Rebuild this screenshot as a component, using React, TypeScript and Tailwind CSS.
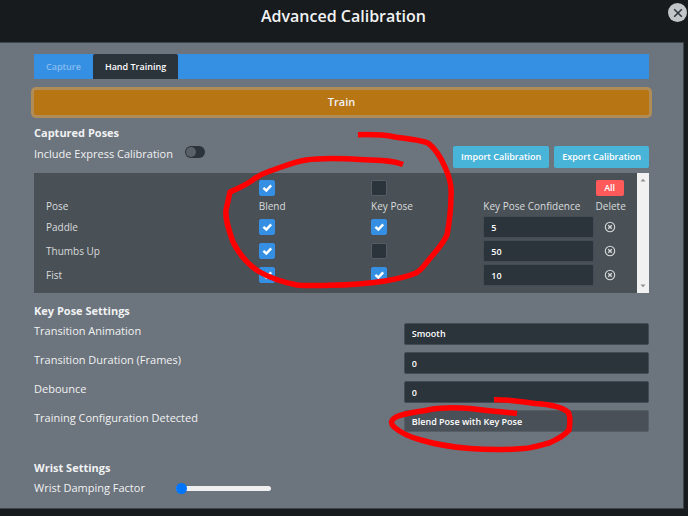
import React, { useState } from "react";

type Pose = {
  name: string;
  blend: boolean;
  keyPose: boolean;
  confidence: string;
};

const initialPoses: Pose[] = [
  { name: "Paddle", blend: true, keyPose: true, confidence: "5" },
  { name: "Thumbs Up", blend: true, keyPose: false, confidence: "50" },
  { name: "Fist", blend: true, keyPose: true, confidence: "10" },
];

const fieldClass =
  "block w-full h-[22px] px-[7px] rounded-xs border border-[#434b54] bg-[#2b333b] text-[9px] leading-4 font-semibold text-white appearance-none outline-none";

const Checkbox = ({
  label,
  checked,
  onChange,
}: {
  label: string;
  checked: boolean;
  onChange: (checked: boolean) => void;
}) => (
  <label className="grid size-4 place-items-center">
    <input
      type="checkbox"
      aria-label={label}
      checked={checked}
      onChange={(e) => onChange(e.target.checked)}
      className="peer col-start-1 row-start-1 size-4 appearance-none rounded-xs border border-[#565d64] bg-[#2b333b] checked:border-[#358fe3] checked:bg-[#358fe3]"
    />
    <svg
      viewBox="0 0 16 16"
      className="pointer-events-none col-start-1 row-start-1 hidden size-4 peer-checked:block"
      fill="none"
      stroke="white"
      strokeWidth="2.4"
    >
      <path d="M4.4 7.9 7.3 10.5 12.2 5.4" />
    </svg>
  </label>
);

const DeleteIcon = () => (
  <svg viewBox="0 0 12 12" className="size-3" fill="none" stroke="#d5d8da">
    <circle cx="6" cy="6" r="4.7" strokeWidth="1.1" />
    <path d="M4.2 4.2 7.8 7.8M7.8 4.2 4.2 7.8" strokeWidth="1.3" />
  </svg>
);

const ScrollBar = () => (
  <div className="flex w-3 shrink-0 flex-col items-center justify-between bg-[#f1f1f1] py-[5px]">
    <svg viewBox="0 0 6 4" className="h-1 w-1.5" fill="#8f8f8f">
      <path d="M0.5 3.5 3 0.8 5.5 3.5Z" />
    </svg>
    <svg viewBox="0 0 6 4" className="h-1 w-1.5" fill="#8f8f8f">
      <path d="M0.5 0.5 3 3.2 5.5 0.5Z" />
    </svg>
  </div>
);

const SettingRow = ({
  id,
  label,
  children,
}: {
  id: string;
  label: string;
  children: React.ReactNode;
}) => (
  <div className="grid grid-cols-[3fr_2fr] items-start gap-x-0.5">
    <label htmlFor={id} className="leading-4">
      {label}
    </label>
    <div>{children}</div>
  </div>
);

// hand drawn marker circles on top of the dialog
const Annotations = () => (
  <svg
    className="pointer-events-none absolute top-0 left-0"
    width="688"
    height="516"
    viewBox="0 0 688 516"
    fill="none"
    stroke="#ff0000"
    strokeLinejoin="round"
  >
    <path
      strokeWidth="5.5"
      d="M358 134.7C375 134.3 385 135 395 137C412 139 421 140 428 143C436 149 441 158 445 167C450 178 452 186 451 196C451 212 449 224 447 235C442 245 437 250 432 256C425 264 422 270 416 273C406 277 398 279 385 281C365 284 350 285 330 285.3C318 285.5 306 286 297 285C282 282 268 277 258 271C246 263 238 252 233 242C229 230 225 220 226 210C228 201 229 197 230 192C238 188 247 185 254 179C260 175 264 173 270 171C283 167 292 162 306 160C322 157.5 345 158.5 360 159.5C378 160.5 392 160 403 164.5"
    />
    <path
      strokeWidth="5.5"
      d="M494 399.7C512 399.5 524 402 536 403.5C550 404.5 562 407 568 412C571 417 570 424 569 430C564 436 556 440 549 443C538 446 532 448 524 448.5C505 450 485 449.8 470 448.5C452 447 434 444 421 440C409 437 401 433 394 427C390 423 391 420 396 417C408 412 420 412 430 409.5C444 407 456 407.5 470 408.5C486 410.5 500 411.5 517 413.5"
    />
  </svg>
);

const App = () => {
  const [poses, setPoses] = useState(initialPoses);
  const [allBlend, setAllBlend] = useState(true);
  const [allKeyPose, setAllKeyPose] = useState(false);
  const [express, setExpress] = useState(false);
  const [damping, setDamping] = useState(0);

  const updatePose = (index: number, changes: Partial<Pose>) => {
    setPoses(poses.map((p, i) => (i === index ? { ...p, ...changes } : p)));
  };

  return (
    <div className="relative min-h-screen bg-[#171b1e] font-['Open_Sans',sans-serif] text-[11px] text-[#f1f2f3]">
      <header className="grid h-[42px] grid-cols-[1fr_auto_1fr] items-start pr-px">
        <h1 className="col-start-2 pt-1 text-base leading-6 font-semibold">
          Advanced Calibration
        </h1>
        <button
          aria-label="Close"
          className="mt-[3px] grid size-[19px] place-items-center justify-self-end rounded-full bg-[#c3c6c8]"
        >
          <svg viewBox="0 0 10 10" className="size-2.5" stroke="#2b333b" strokeWidth="1.5">
            <path d="M1.2 1.2 8.8 8.8M8.8 1.2 1.2 8.8" />
          </svg>
        </button>
      </header>

      <main className="mr-1 border-y border-r border-[#3c444c] bg-[#6c747d] pt-[11px] pr-[34px] pb-3 pl-[34px]">
        <nav className="flex h-[25px] bg-[#358fe3] text-[9px] font-semibold">
          <button className="px-3 text-[#86bdf0]">Capture</button>
          <button className="rounded-t-xs bg-[#2b333b] px-3 text-white">Hand Training</button>
        </nav>

        <button className="mt-[11px] block h-[25px] w-full rounded-xs bg-[#b87514] text-[11px] font-semibold ring-3 ring-[#b08d57]">
          Train
        </button>

        <h2 className="mt-2.5 leading-4 font-bold">Captured Poses</h2>
        <div className="mt-[5px] flex items-start">
          <label htmlFor="express" className="leading-4">
            Include Express Calibration
          </label>
          <input
            id="express"
            type="checkbox"
            role="switch"
            checked={express}
            onChange={(e) => setExpress(e.target.checked)}
            className="ml-3 h-3 w-5 appearance-none rounded-full bg-[#2b333b] p-px before:block before:size-2.5 before:rounded-full before:bg-[#596067] checked:before:ml-2"
          />
          <div className="ml-auto flex gap-[5px] text-[9px] font-semibold text-white">
            <button className="h-[22px] rounded-xs bg-[#48b4d8] px-2">
              Import Calibration
            </button>
            <button className="h-[22px] rounded-xs bg-[#48b4d8] px-2">
              Export Calibration
            </button>
          </div>
        </div>

        <div className="mt-[5px] flex h-[120px] bg-[#4a5156]">
          <div className="min-w-0 grow overflow-hidden pt-[5px] pl-3">
            <table className="w-full table-fixed text-left text-[10px] text-[#d9dbdd]">
              <colgroup>
                <col className="w-[36%]" />
                <col className="w-[19%]" />
                <col className="w-[19%]" />
                <col className="w-[19%]" />
                <col className="w-[7%]" />
              </colgroup>
              <thead>
                <tr className="h-5">
                  <td />
                  <td>
                    <Checkbox label="Blend all" checked={allBlend} onChange={setAllBlend} />
                  </td>
                  <td>
                    <Checkbox label="Key pose all" checked={allKeyPose} onChange={setAllKeyPose} />
                  </td>
                  <td />
                  <td>
                    <button
                      onClick={() => setPoses([])}
                      className="block h-4 w-7 rounded-xs bg-[#ff5a5a] text-[9px] leading-4 font-semibold text-white"
                    >
                      All
                    </button>
                  </td>
                </tr>
                <tr className="h-[17px]">
                  <th className="font-normal">Pose</th>
                  <th className="font-normal">Blend</th>
                  <th className="font-normal">Key Pose</th>
                  <th className="font-normal whitespace-nowrap">Key Pose Confidence</th>
                  <th className="font-normal">Delete</th>
                </tr>
              </thead>
              <tbody>
                {poses.map((pose, index) => (
                  <tr key={pose.name} className="h-6">
                    <td>{pose.name}</td>
                    <td>
                      <Checkbox
                        label={`${pose.name} blend`}
                        checked={pose.blend}
                        onChange={(blend) => updatePose(index, { blend })}
                      />
                    </td>
                    <td>
                      <Checkbox
                        label={`${pose.name} key pose`}
                        checked={pose.keyPose}
                        onChange={(keyPose) => updatePose(index, { keyPose })}
                      />
                    </td>
                    <td className="pr-0.5">
                      <input
                        type="text"
                        aria-label={`${pose.name} confidence`}
                        value={pose.confidence}
                        onChange={(e) => updatePose(index, { confidence: e.target.value })}
                        className={fieldClass}
                      />
                    </td>
                    <td>
                      <button
                        aria-label={`Delete ${pose.name}`}
                        onClick={() => setPoses(poses.filter((_, i) => i !== index))}
                        className="grid h-4 w-7 place-items-center"
                      >
                        <DeleteIcon />
                      </button>
                    </td>
                  </tr>
                ))}
              </tbody>
            </table>
          </div>
          <ScrollBar />
        </div>

        <h2 className="mt-2.5 leading-4 font-bold">Key Pose Settings</h2>
        <div className="mt-1 flex flex-col gap-[7px]">
          <SettingRow id="animation" label="Transition Animation">
            <select id="animation" className={fieldClass}>
              <option>Smooth</option>
            </select>
          </SettingRow>
          <SettingRow id="duration" label="Transition Duration (Frames)">
            <input id="duration" type="text" defaultValue="0" className={fieldClass} />
          </SettingRow>
          <SettingRow id="debounce" label="Debounce">
            <input id="debounce" type="text" defaultValue="0" className={fieldClass} />
          </SettingRow>
          <SettingRow id="configuration" label="Training Configuration Detected">
            <input
              id="configuration"
              type="text"
              readOnly
              value="Blend Pose with Key Pose"
              className="block h-[22px] w-full rounded-xs border border-[#555d65] bg-[#495057] px-[7px] text-[9px] leading-4 font-semibold text-white outline-none"
            />
          </SettingRow>
        </div>

        <h2 className="mt-7 leading-4 font-bold">Wrist Settings</h2>
        <div className="mt-1 flex h-4 items-center">
          <label htmlFor="damping">Wrist Damping Factor</label>
          <input
            id="damping"
            type="range"
            min={0}
            max={100}
            value={damping}
            onChange={(e) => setDamping(Number(e.target.value))}
            className="ml-[31px] h-[5px] w-[95px] appearance-none rounded-full bg-[#efefef] [&::-webkit-slider-thumb]:size-[11px] [&::-webkit-slider-thumb]:appearance-none [&::-webkit-slider-thumb]:rounded-full [&::-webkit-slider-thumb]:bg-[#0075ff]"
          />
        </div>
      </main>

      <Annotations />
    </div>
  );
};

export default App;
